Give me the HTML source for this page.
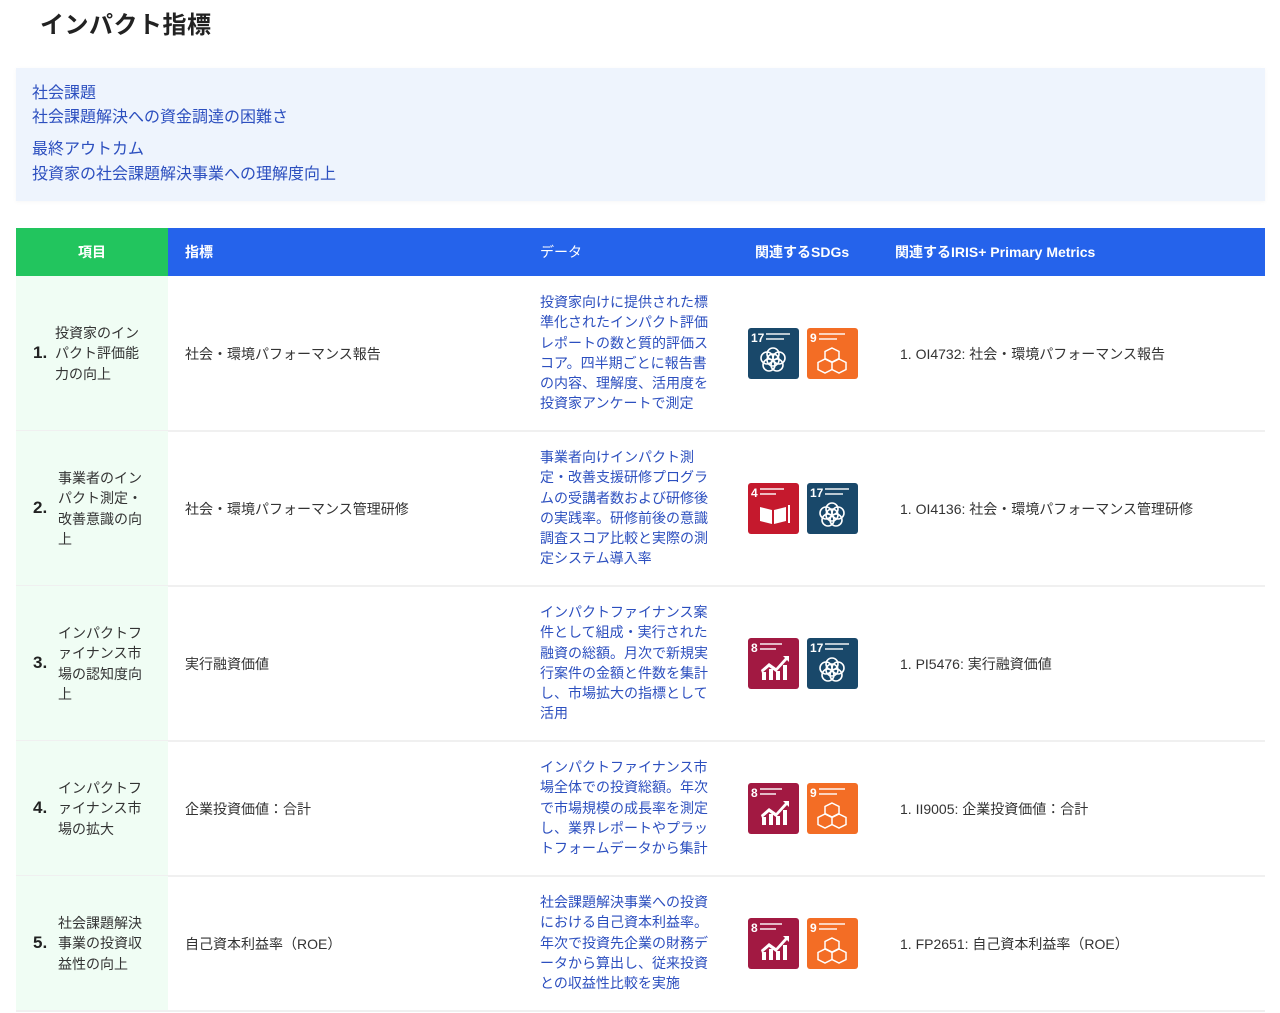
<!DOCTYPE html>
<html><head><meta charset="utf-8">
<style>
*{box-sizing:border-box;margin:0;padding:0}
body{width:1280px;height:1013px;background:#fff;font-family:"Liberation Sans","Noto Sans CJK JP",sans-serif;position:relative;overflow:hidden;color:#333}
h1{position:absolute;left:40px;top:5px;font-size:24px;font-weight:bold;color:#222;letter-spacing:0.5px}
.box{position:absolute;left:16px;top:68px;width:1249px;height:133px;background:#eef4fd;box-shadow:0 1px 4px rgba(0,0,0,0.04)}
.box p{position:absolute;left:16px;font-size:16px;color:#2c4fbf;line-height:24px}
.hdr{position:absolute;top:228px;height:48px;left:16px;width:1249px;background:#2563eb;color:#fff;font-size:14px;font-weight:bold}
.hdr div{position:absolute;top:0;line-height:48px}
.hdr .g{left:0;width:152px;background:#22c55e;text-align:center}
.row{position:absolute;left:16px;width:1249px;border-bottom:2px solid #f0f0f0}
.c1{position:absolute;left:0;top:0;bottom:0;width:152px;background:#f0fdf4}
.num{position:absolute;left:17px;font-size:17px;font-weight:bold;color:#222}
.it{position:absolute;left:39px;width:92px;font-size:14px;line-height:20.3px;color:#333}
.ind{position:absolute;left:169px;font-size:14px;color:#333}
.dat{position:absolute;left:524px;width:174px;font-size:14px;line-height:20.3px;color:#2c4fbf}
.sdg{position:absolute;width:51px;height:51px}
.iris{position:absolute;left:884px;font-size:14px;color:#333}
</style></head><body>
<h1>インパクト指標</h1>
<div class="box">
<p style="top:14px">社会課題</p>
<p style="top:38px">社会課題解決への資金調達の困難さ</p>
<p style="top:70px">最終アウトカム</p>
<p style="top:95px">投資家の社会課題解決事業への理解度向上</p>
</div>
<div class="hdr">
<div class="g">項目</div>
<div style="left:169px">指標</div>
<div style="left:524px;font-weight:normal">データ</div>
<div style="left:739px">関連するSDGs</div>
<div style="left:879px">関連するIRIS+ Primary Metrics</div>
</div>

<svg width="0" height="0" style="position:absolute">
<defs>
<g id="flower" fill="none" stroke="#fff" stroke-width="1.6">
<circle cx="25" cy="26" r="6"/><circle cx="25" cy="20" r="6"/><circle cx="31" cy="24" r="6"/><circle cx="29" cy="31" r="6"/><circle cx="21" cy="31" r="6"/><circle cx="19" cy="24" r="6"/>
</g>
<g id="cubes" fill="none" stroke="#fff" stroke-width="1.5">
<path d="M25 14l7 3.5v7l-7 3.5-7-3.5v-7zM18 25l7 3.5v7l-7 3.5-7-3.5v-7zM32 25l7 3.5v7l-7 3.5-7-3.5v-7z"/>
</g>
<g id="book" fill="#fff"><path d="M12 24l12 3v14l-12-3zM38 24l-12 3v14l12-3z"/><rect x="40" y="22" width="2" height="18"/></g>
<g id="chart" fill="#fff"><rect x="14" y="34" width="4" height="8"/><rect x="21" y="31" width="4" height="11"/><rect x="28" y="33" width="4" height="9"/><rect x="35" y="27" width="4" height="15"/><path d="M13 32l8-7 7 5 9-10-2-2h6v6l-2-2-11 12-7-5-7 6z"/></g>
</defs></svg>

<div class="row" style="top:276px;height:156px">
<div class="c1"></div>
<div class="num" style="top:67px">1.</div>
<div class="it" style="top:47px">投資家のインパクト評価能力の向上</div>
<div class="ind" style="top:68px">社会・環境パフォーマンス報告</div>
<div class="dat" style="top:16px">投資家向けに提供された標準化されたインパクト評価レポートの数と質的評価スコア。四半期ごとに報告書の内容、理解度、活用度を投資家アンケートで測定</div>
<svg class="sdg" style="left:732px;top:52px" viewBox="0 0 51 51"><rect width="51" height="51" rx="3" fill="#19486a"/><text x="3" y="14" fill="#fff" font-size="12" font-weight="bold" font-family="Liberation Sans">17</text><rect x="18" y="5" width="24" height="2" fill="#fff" opacity=".7"/><rect x="18" y="10" width="18" height="2" fill="#fff" opacity=".7"/><use href="#flower" y="6"/></svg>
<svg class="sdg" style="left:791px;top:52px" viewBox="0 0 51 51"><rect width="51" height="51" rx="3" fill="#f36d25"/><text x="3" y="14" fill="#fff" font-size="12" font-weight="bold" font-family="Liberation Sans">9</text><rect x="12" y="5" width="26" height="2" fill="#fff" opacity=".7"/><rect x="12" y="10" width="18" height="2" fill="#fff" opacity=".7"/><use href="#cubes" y="6"/></svg>
<div class="iris" style="top:68px">1. OI4732: 社会・環境パフォーマンス報告</div>
</div>

<div class="row" style="top:431px;height:156px">
<div class="c1"></div>
<div class="num" style="top:67px">2.</div>
<div class="it" style="top:37px;left:42px">事業者のインパクト測定・改善意識の向上</div>
<div class="ind" style="top:68px">社会・環境パフォーマンス管理研修</div>
<div class="dat" style="top:16px">事業者向けインパクト測定・改善支援研修プログラムの受講者数および研修後の実践率。研修前後の意識調査スコア比較と実際の測定システム導入率</div>
<svg class="sdg" style="left:732px;top:52px" viewBox="0 0 51 51"><rect width="51" height="51" rx="3" fill="#c5192d"/><text x="3" y="14" fill="#fff" font-size="12" font-weight="bold" font-family="Liberation Sans">4</text><rect x="12" y="5" width="24" height="2" fill="#fff" opacity=".7"/><rect x="12" y="10" width="16" height="2" fill="#fff" opacity=".7"/><use href="#book"/></svg>
<svg class="sdg" style="left:791px;top:52px" viewBox="0 0 51 51"><rect width="51" height="51" rx="3" fill="#19486a"/><text x="3" y="14" fill="#fff" font-size="12" font-weight="bold" font-family="Liberation Sans">17</text><rect x="18" y="5" width="24" height="2" fill="#fff" opacity=".7"/><rect x="18" y="10" width="18" height="2" fill="#fff" opacity=".7"/><use href="#flower" y="6"/></svg>
<div class="iris" style="top:68px">1. OI4136: 社会・環境パフォーマンス管理研修</div>
</div>

<div class="row" style="top:586px;height:156px">
<div class="c1"></div>
<div class="num" style="top:67px">3.</div>
<div class="it" style="top:37px;left:42px">インパクトファイナンス市場の認知度向上</div>
<div class="ind" style="top:68px">実行融資価値</div>
<div class="dat" style="top:16px">インパクトファイナンス案件として組成・実行された融資の総額。月次で新規実行案件の金額と件数を集計し、市場拡大の指標として活用</div>
<svg class="sdg" style="left:732px;top:52px" viewBox="0 0 51 51"><rect width="51" height="51" rx="3" fill="#a21942"/><text x="3" y="14" fill="#fff" font-size="12" font-weight="bold" font-family="Liberation Sans">8</text><rect x="12" y="5" width="22" height="2" fill="#fff" opacity=".7"/><rect x="12" y="10" width="16" height="2" fill="#fff" opacity=".7"/><use href="#chart"/></svg>
<svg class="sdg" style="left:791px;top:52px" viewBox="0 0 51 51"><rect width="51" height="51" rx="3" fill="#19486a"/><text x="3" y="14" fill="#fff" font-size="12" font-weight="bold" font-family="Liberation Sans">17</text><rect x="18" y="5" width="24" height="2" fill="#fff" opacity=".7"/><rect x="18" y="10" width="18" height="2" fill="#fff" opacity=".7"/><use href="#flower" y="6"/></svg>
<div class="iris" style="top:68px">1. PI5476: 実行融資価値</div>
</div>

<div class="row" style="top:741px;height:136px">
<div class="c1"></div>
<div class="num" style="top:57px">4.</div>
<div class="it" style="top:37px;left:42px">インパクトファイナンス市場の拡大</div>
<div class="ind" style="top:58px">企業投資価値：合計</div>
<div class="dat" style="top:16px">インパクトファイナンス市場全体での投資総額。年次で市場規模の成長率を測定し、業界レポートやプラットフォームデータから集計</div>
<svg class="sdg" style="left:732px;top:42px" viewBox="0 0 51 51"><rect width="51" height="51" rx="3" fill="#a21942"/><text x="3" y="14" fill="#fff" font-size="12" font-weight="bold" font-family="Liberation Sans">8</text><rect x="12" y="5" width="22" height="2" fill="#fff" opacity=".7"/><rect x="12" y="10" width="16" height="2" fill="#fff" opacity=".7"/><use href="#chart"/></svg>
<svg class="sdg" style="left:791px;top:42px" viewBox="0 0 51 51"><rect width="51" height="51" rx="3" fill="#f36d25"/><text x="3" y="14" fill="#fff" font-size="12" font-weight="bold" font-family="Liberation Sans">9</text><rect x="12" y="5" width="26" height="2" fill="#fff" opacity=".7"/><rect x="12" y="10" width="18" height="2" fill="#fff" opacity=".7"/><use href="#cubes" y="6"/></svg>
<div class="iris" style="top:58px">1. II9005: 企業投資価値：合計</div>
</div>

<div class="row" style="top:876px;height:136px">
<div class="c1"></div>
<div class="num" style="top:57px">5.</div>
<div class="it" style="top:37px;left:42px">社会課題解決事業の投資収益性の向上</div>
<div class="ind" style="top:58px">自己資本利益率（ROE）</div>
<div class="dat" style="top:16px">社会課題解決事業への投資における自己資本利益率。年次で投資先企業の財務データから算出し、従来投資との収益性比較を実施</div>
<svg class="sdg" style="left:732px;top:42px" viewBox="0 0 51 51"><rect width="51" height="51" rx="3" fill="#a21942"/><text x="3" y="14" fill="#fff" font-size="12" font-weight="bold" font-family="Liberation Sans">8</text><rect x="12" y="5" width="22" height="2" fill="#fff" opacity=".7"/><rect x="12" y="10" width="16" height="2" fill="#fff" opacity=".7"/><use href="#chart"/></svg>
<svg class="sdg" style="left:791px;top:42px" viewBox="0 0 51 51"><rect width="51" height="51" rx="3" fill="#f36d25"/><text x="3" y="14" fill="#fff" font-size="12" font-weight="bold" font-family="Liberation Sans">9</text><rect x="12" y="5" width="26" height="2" fill="#fff" opacity=".7"/><rect x="12" y="10" width="18" height="2" fill="#fff" opacity=".7"/><use href="#cubes" y="6"/></svg>
<div class="iris" style="top:58px">1. FP2651: 自己資本利益率（ROE）</div>
</div>
</body></html>
